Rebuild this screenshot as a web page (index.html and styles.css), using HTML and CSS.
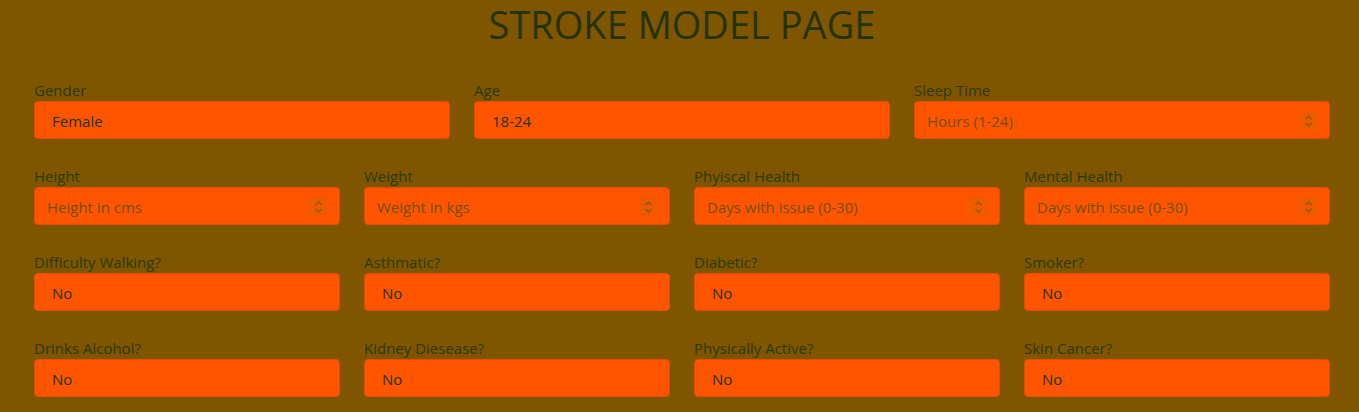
FILE: index.html
```html
<!DOCTYPE html>
<html lang="en">
<head>
<meta charset="utf-8">
<title>Stroke Model Page</title>
<link rel="stylesheet" href="styles.css">
</head>
<body>
<main class="page">
  <h1 class="title">STROKE MODEL PAGE</h1>
  <form class="form">
    <div class="row row-3">
      <div class="field">
        <label class="label">Gender</label>
        <div class="control select"><span class="value">Female</span></div>
      </div>
      <div class="field">
        <label class="label">Age</label>
        <div class="control select"><span class="value">18-24</span></div>
      </div>
      <div class="field">
        <label class="label">Sleep Time</label>
        <div class="control number"><span class="placeholder">Hours (1-24)</span><span class="spin"><svg width="9" height="16" viewBox="0 0 9 16"><path d="M1.5 6 L4.5 3 L7.5 6 M1.5 10 L4.5 13 L7.5 10" fill="none" stroke="#8a5a00" stroke-width="1.3"/></svg></span></div>
      </div>
    </div>
    <div class="row row-4">
      <div class="field">
        <label class="label">Height</label>
        <div class="control number"><span class="placeholder">Height in cms</span><span class="spin"><svg width="9" height="16" viewBox="0 0 9 16"><path d="M1.5 6 L4.5 3 L7.5 6 M1.5 10 L4.5 13 L7.5 10" fill="none" stroke="#8a5a00" stroke-width="1.3"/></svg></span></div>
      </div>
      <div class="field">
        <label class="label">Weight</label>
        <div class="control number"><span class="placeholder">Weight in kgs</span><span class="spin"><svg width="9" height="16" viewBox="0 0 9 16"><path d="M1.5 6 L4.5 3 L7.5 6 M1.5 10 L4.5 13 L7.5 10" fill="none" stroke="#8a5a00" stroke-width="1.3"/></svg></span></div>
      </div>
      <div class="field">
        <label class="label">Phyiscal Health</label>
        <div class="control number"><span class="placeholder">Days with issue (0-30)</span><span class="spin"><svg width="9" height="16" viewBox="0 0 9 16"><path d="M1.5 6 L4.5 3 L7.5 6 M1.5 10 L4.5 13 L7.5 10" fill="none" stroke="#8a5a00" stroke-width="1.3"/></svg></span></div>
      </div>
      <div class="field">
        <label class="label">Mental Health</label>
        <div class="control number"><span class="placeholder">Days with issue (0-30)</span><span class="spin"><svg width="9" height="16" viewBox="0 0 9 16"><path d="M1.5 6 L4.5 3 L7.5 6 M1.5 10 L4.5 13 L7.5 10" fill="none" stroke="#8a5a00" stroke-width="1.3"/></svg></span></div>
      </div>
    </div>
    <div class="row row-4">
      <div class="field">
        <label class="label">Difficulty Walking?</label>
        <div class="control select"><span class="value">No</span></div>
      </div>
      <div class="field">
        <label class="label">Asthmatic?</label>
        <div class="control select"><span class="value">No</span></div>
      </div>
      <div class="field">
        <label class="label">Diabetic?</label>
        <div class="control select"><span class="value">No</span></div>
      </div>
      <div class="field">
        <label class="label">Smoker?</label>
        <div class="control select"><span class="value">No</span></div>
      </div>
    </div>
    <div class="row row-4">
      <div class="field">
        <label class="label">Drinks Alcohol?</label>
        <div class="control select"><span class="value">No</span></div>
      </div>
      <div class="field">
        <label class="label">Kidney Diesease?</label>
        <div class="control select"><span class="value">No</span></div>
      </div>
      <div class="field">
        <label class="label">Physically Active?</label>
        <div class="control select"><span class="value">No</span></div>
      </div>
      <div class="field">
        <label class="label">Skin Cancer?</label>
        <div class="control select"><span class="value">No</span></div>
      </div>
    </div>
  </form>
</main>
</body>
</html>
```
FILE: styles.css
```css
html, body {
  margin: 0;
  padding: 0;
  background: #7f5500;
}
body {
  font-family: "Open Sans", "Noto Sans", sans-serif;
  color: #233300;
}
.page {
  width: 1296px;
  padding: 0 29px 0 34px;
}
.title {
  margin: 0;
  height: 48px;
  line-height: 48px;
  text-align: center;
  font-size: 38px;
  font-weight: 400;
  color: #233300;
}
.form {
  display: flex;
  flex-direction: column;
  gap: 22px;
  padding-top: 27px;
}
.row {
  display: grid;
  column-gap: 24px;
}
.row-3 { grid-template-columns: repeat(3, 1fr); }
.row-4 { grid-template-columns: repeat(4, 1fr); }
.field {
  display: flex;
  flex-direction: column;
}
.label {
  font-size: 15px;
  line-height: 22px;
  height: 22px;
  margin-top: 4px;
  color: #2a3a00;
}
.control {
  position: relative;
  box-sizing: border-box;
  height: 38px;
  padding-top: 1px;
  background: #ff5500;
  border: 1px solid #e24d00;
  border-radius: 4px;
  display: flex;
  align-items: center;
  font-size: 15px;
}
.select { padding-left: 17px; }
.number { padding-left: 12px; }
.value { color: #233300; }
.placeholder { color: #6e5000; }
.spin {
  position: absolute;
  right: 12px;
  top: 9px;
  width: 18px;
  height: 19px;
  background: #ee5a00;
  display: flex;
  align-items: center;
  justify-content: center;
}
```
